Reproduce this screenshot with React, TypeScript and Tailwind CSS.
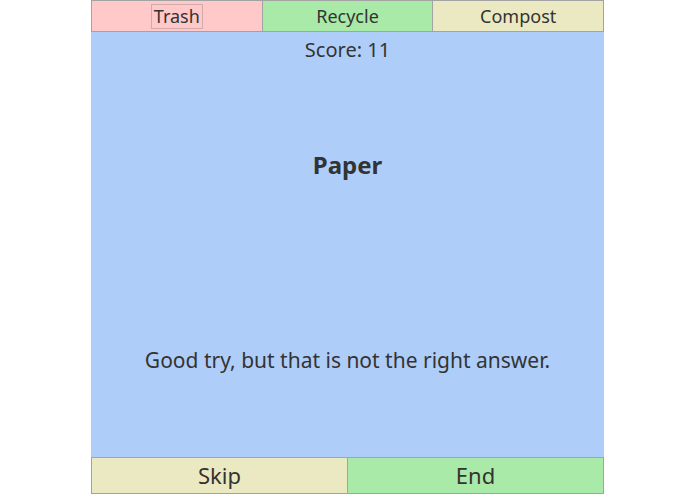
const font = { fontFamily: '"Comic Sans MS", "Noto Sans", sans-serif' };

const App = () => {
  return (
    <div className="flex h-[494px] w-full justify-center bg-white text-[#333]" style={font}>
      <div className="flex w-[513px] flex-col bg-[#afcdf9]">
        <div className="flex h-[32px]">
          <button
            type="button"
            className="flex flex-1 items-center justify-center border border-[#a3a3a3] bg-[#ffc9c9] text-[18px]"
          >
            <span className="border border-[#d4a9a9] px-[2px] leading-[23px]">Trash</span>
          </button>
          <button
            type="button"
            className="flex flex-1 items-center justify-center border border-l-0 border-[#a3a3a3] bg-[#aaeaa8] text-[18px]"
          >
            Recycle
          </button>
          <button
            type="button"
            className="flex flex-1 items-center justify-center border border-l-0 border-[#a3a3a3] bg-[#ebe9c1] text-[18px]"
          >
            Compost
          </button>
        </div>

        <div className="flex flex-1 flex-col items-center">
          <p className="mt-[4px] text-[20px] leading-[28px]">Score: 11</p>
          <h1 className="mt-[84px] text-[24px] font-bold leading-[34px]">Paper</h1>
          <p className="mt-[164px] text-[21px] leading-[28px]">Good try, but that is not the right answer.</p>
        </div>

        <div className="flex h-[37px]">
          <button
            type="button"
            className="flex-1 border border-[#a3a3a3] bg-[#ebe9c1] text-[22px]"
          >
            Skip
          </button>
          <button
            type="button"
            className="flex-1 border border-l-0 border-[#a3a3a3] bg-[#aaeaa8] text-[22px]"
          >
            End
          </button>
        </div>
      </div>
    </div>
  );
};

export default App;
